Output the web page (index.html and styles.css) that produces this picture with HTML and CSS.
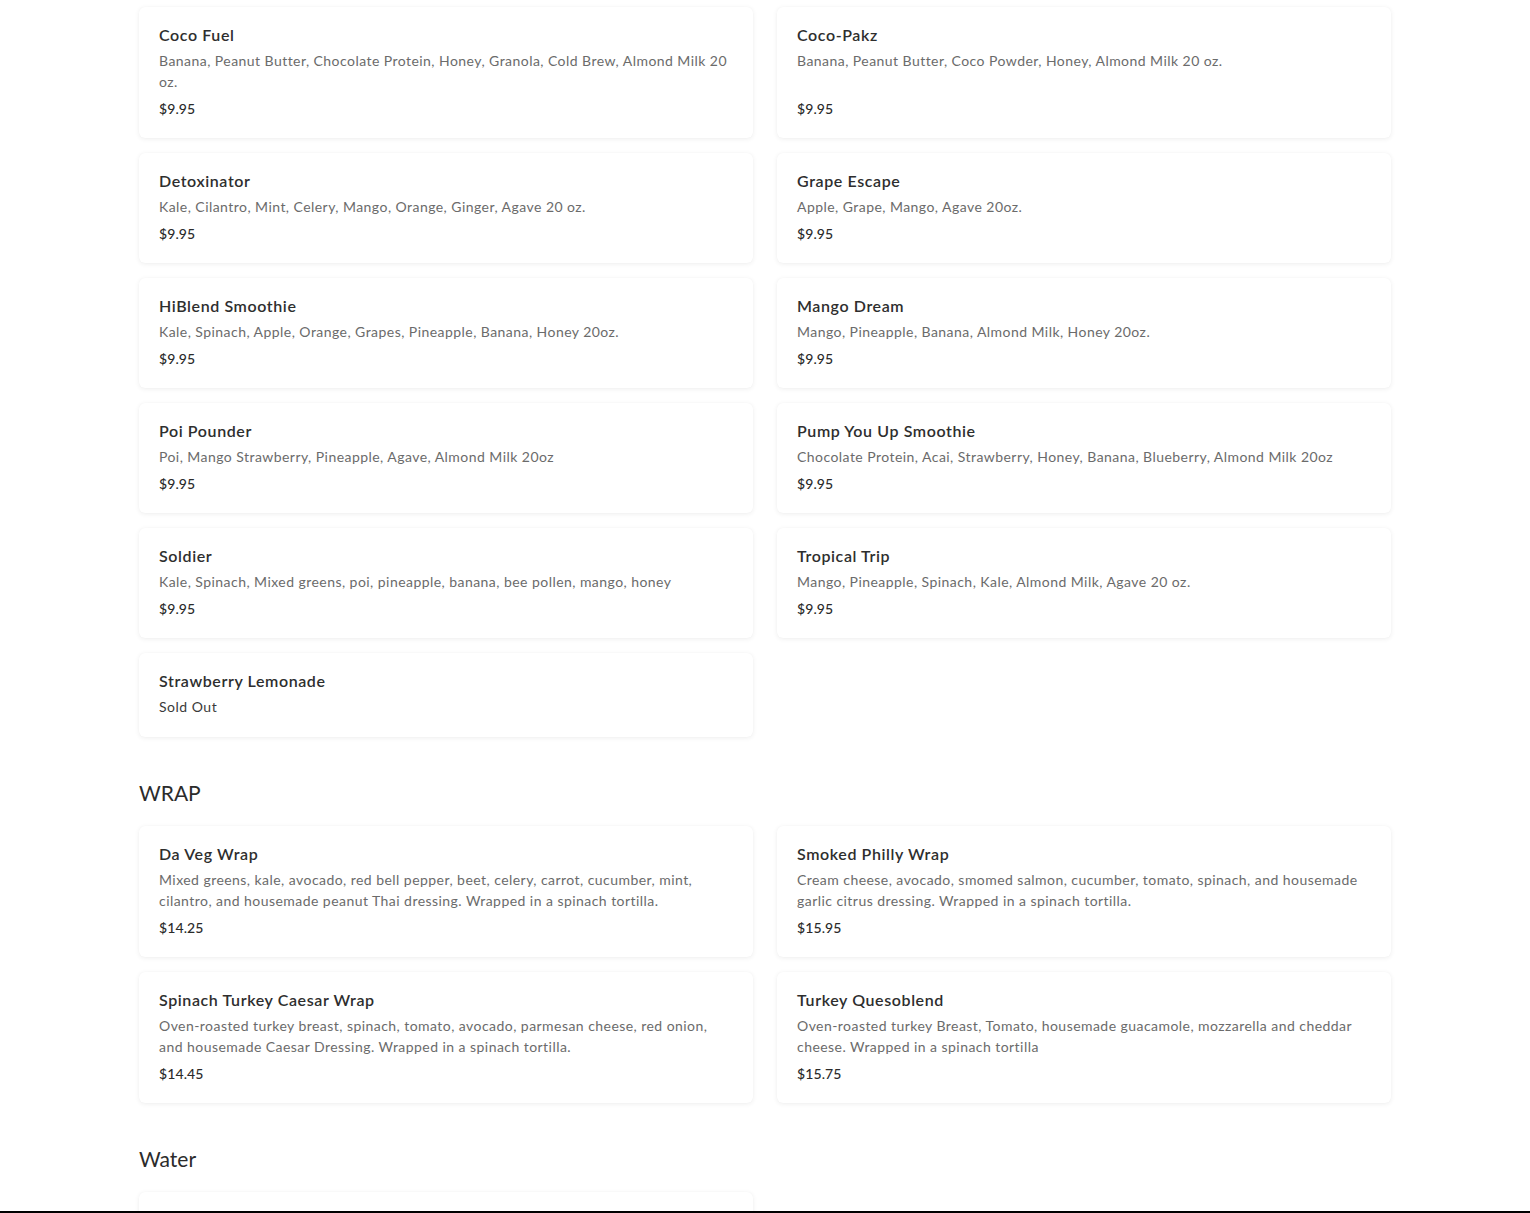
FILE: index.html
```html
<!DOCTYPE html>
<html lang="en">
<head>
<meta charset="utf-8">
<title>Menu</title>
<link rel="stylesheet" href="styles.css">
</head>
<body>
<main class="menu">
  <section class="section first">
    <div class="grid">
      <div class="card">
        <div class="title">Coco Fuel</div>
        <div class="desc">Banana, Peanut Butter, Chocolate Protein, Honey, Granola, Cold Brew, Almond Milk 20 oz.</div>
        <div class="price">$9.95</div>
      </div>
      <div class="card">
        <div class="title">Coco-Pakz</div>
        <div class="desc">Banana, Peanut Butter, Coco Powder, Honey, Almond Milk 20 oz.</div>
        <div class="price">$9.95</div>
      </div>
      <div class="card">
        <div class="title">Detoxinator</div>
        <div class="desc">Kale, Cilantro, Mint, Celery, Mango, Orange, Ginger, Agave 20 oz.</div>
        <div class="price">$9.95</div>
      </div>
      <div class="card">
        <div class="title">Grape Escape</div>
        <div class="desc">Apple, Grape, Mango, Agave 20oz.</div>
        <div class="price">$9.95</div>
      </div>
      <div class="card">
        <div class="title">HiBlend Smoothie</div>
        <div class="desc">Kale, Spinach, Apple, Orange, Grapes, Pineapple, Banana, Honey 20oz.</div>
        <div class="price">$9.95</div>
      </div>
      <div class="card">
        <div class="title">Mango Dream</div>
        <div class="desc">Mango, Pineapple, Banana, Almond Milk, Honey 20oz.</div>
        <div class="price">$9.95</div>
      </div>
      <div class="card">
        <div class="title">Poi Pounder</div>
        <div class="desc">Poi, Mango Strawberry, Pineapple, Agave, Almond Milk 20oz</div>
        <div class="price">$9.95</div>
      </div>
      <div class="card">
        <div class="title">Pump You Up Smoothie</div>
        <div class="desc">Chocolate Protein, Acai, Strawberry, Honey, Banana, Blueberry, Almond Milk 20oz</div>
        <div class="price">$9.95</div>
      </div>
      <div class="card">
        <div class="title">Soldier</div>
        <div class="desc">Kale, Spinach, Mixed greens, poi, pineapple, banana, bee pollen, mango, honey</div>
        <div class="price">$9.95</div>
      </div>
      <div class="card">
        <div class="title">Tropical Trip</div>
        <div class="desc">Mango, Pineapple, Spinach, Kale, Almond Milk, Agave 20 oz.</div>
        <div class="price">$9.95</div>
      </div>
      <div class="card">
        <div class="title">Strawberry Lemonade</div>
        <div class="sold">Sold Out</div>
      </div>
    </div>
  </section>

  <section class="section">
    <h2 class="heading">WRAP</h2>
    <div class="grid">
      <div class="card">
        <div class="title">Da Veg Wrap</div>
        <div class="desc">Mixed greens, kale, avocado, red bell pepper, beet, celery, carrot, cucumber, mint, cilantro, and housemade peanut Thai dressing. Wrapped in a spinach tortilla.</div>
        <div class="price">$14.25</div>
      </div>
      <div class="card">
        <div class="title">Smoked Philly Wrap</div>
        <div class="desc">Cream cheese, avocado, smomed salmon, cucumber, tomato, spinach, and housemade garlic citrus dressing. Wrapped in a spinach tortilla.</div>
        <div class="price">$15.95</div>
      </div>
      <div class="card">
        <div class="title">Spinach Turkey Caesar Wrap</div>
        <div class="desc">Oven-roasted turkey breast, spinach, tomato, avocado, parmesan cheese, red onion, and housemade Caesar Dressing. Wrapped in a spinach tortilla.</div>
        <div class="price">$14.45</div>
      </div>
      <div class="card">
        <div class="title">Turkey Quesoblend</div>
        <div class="desc">Oven-roasted turkey Breast, Tomato, housemade guacamole, mozzarella and cheddar cheese. Wrapped in a spinach tortilla</div>
        <div class="price">$15.75</div>
      </div>
    </div>
  </section>

  <section class="section">
    <h2 class="heading">Water</h2>
    <div class="grid">
      <div class="card card-peek"></div>
    </div>
  </section>
</main>
<div class="bottom-bar"></div>
</body>
</html>
```

FILE: styles.css
```css
html, body {
  margin: 0;
  padding: 0;
  background: #ffffff;
}

body {
  font-family: "Lato", "Liberation Sans", sans-serif;
  color: #2b2b2b;
  height: 1213px;
  overflow: hidden;
}

.menu {
  width: 1252px;
  margin: 0 auto;
  padding-top: 7px;
}

.section {
  margin-top: 42px;
}

.section.first {
  margin-top: 0;
}

.heading {
  margin: 0 0 19px 0;
  font-size: 21px;
  line-height: 28px;
  font-weight: 400;
  color: #2b2b2b;
  letter-spacing: 0;
}

.grid {
  display: grid;
  grid-template-columns: 1fr 1fr;
  column-gap: 24px;
  row-gap: 15px;
}

.card {
  display: flex;
  flex-direction: column;
  background: #ffffff;
  border-radius: 6px;
  padding: 20px;
  box-shadow: 0 1px 5px rgba(0, 0, 0, 0.07), 0 0 1px rgba(0, 0, 0, 0.04);
}

.card-peek {
  height: 60px;
}

.title {
  font-size: 16px;
  line-height: 16px;
  font-weight: 600;
  color: #2e2e2e;
  letter-spacing: 0.6px;
}

.desc {
  margin-top: 7px;
  font-size: 14px;
  line-height: 21px;
  color: #6b6b6b;
  letter-spacing: 0.45px;
}

.sold {
  margin-top: 7px;
  font-size: 14px;
  line-height: 21px;
  color: #3a3a3a;
  letter-spacing: 0.5px;
}

.price {
  margin-top: auto;
  padding-top: 8px;
  font-size: 14px;
  line-height: 18px;
  font-weight: 500;
  color: #2b2b2b;
  letter-spacing: 0.1px;
}

.bottom-bar {
  position: fixed;
  left: 0;
  right: 0;
  bottom: 0;
  height: 2px;
  background: #000000;
}
```
